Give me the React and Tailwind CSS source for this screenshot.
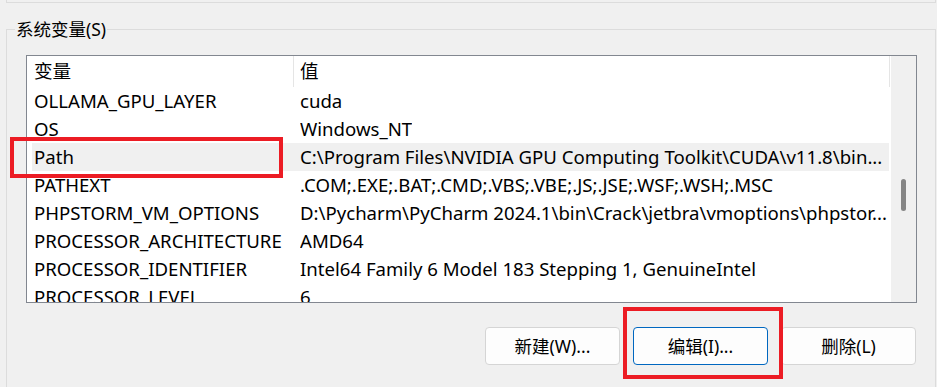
const ROWS = [
  ['OLLAMA_GPU_LAYER', 'cuda'],
  ['OS', 'Windows_NT'],
  ['Path', 'C:\\Program Files\\NVIDIA GPU Computing Toolkit\\CUDA\\v11.8\\bin...'],
  ['PATHEXT', '.COM;.EXE;.BAT;.CMD;.VBS;.VBE;.JS;.JSE;.WSF;.WSH;.MSC'],
  ['PHPSTORM_VM_OPTIONS', 'D:\\Pycharm\\PyCharm 2024.1\\bin\\Crack\\jetbra\\vmoptions\\phpstor...'],
  ['PROCESSOR_ARCHITECTURE', 'AMD64'],
  ['PROCESSOR_IDENTIFIER', 'Intel64 Family 6 Model 183 Stepping 1, GenuineIntel'],
  ['PROCESSOR_LEVEL', '6'],
]

const FONT = "font-['Noto_Sans','Noto_Sans_CJK_SC',sans-serif]"

function Button({ children, active = false }) {
  return (
    <button
      type="button"
      className={`w-[135px] h-[38px] rounded-[4px] bg-[#fdfdfd] text-[17.5px] text-black flex items-center justify-center ${
        active ? 'border border-[#0067c0]' : 'border border-[#d5d5d5]'
      }`}
    >
      {children}
    </button>
  )
}

export default function App() {
  return (
    <div className={`relative w-[937px] h-[387px] overflow-hidden bg-[#f0f0f0] text-black ${FONT}`}>
      {/* bottom of the group box above */}
      <div className="ml-[6px] mr-[1px] h-[3px] border-x border-b border-[#dcdcdc]" />

      {/* System variables group */}
      <div className="relative mt-[26px] ml-[6px] mr-[1px] h-[400px] border border-[#dcdcdc] pt-[25px] pl-[19px]">
        <span className="absolute left-[8px] -top-[13px] px-[1px] bg-[#f0f0f0] text-[17.5px] leading-[24px]">
          系统变量(S)
        </span>

        {/* list view */}
        <div className="w-[891px] h-[248px] border border-[#828790] bg-white flex">
          <div className="w-[862px] h-full overflow-hidden text-[18.6px]">
            <div className="flex h-[31px] items-center">
              <div className="w-[266px] pl-[7px] leading-none">变量</div>
              <div className="w-px h-full bg-[#e5e5e5]" />
              <div className="pl-[6px] leading-none">值</div>
            </div>
            {ROWS.map(([name, value]) => (
              <div
                key={name}
                className={`flex h-[28px] items-center whitespace-nowrap ${
                  name === 'Path' ? 'bg-[#f0f0f0] ml-[5px] pl-[2px]' : 'pl-[7px]'
                }`}
              >
                <div className="w-[266px] shrink-0">{name}</div>
                <div className="overflow-hidden">{value}</div>
              </div>
            ))}
          </div>
          <div className="w-px h-[31px] bg-[#e5e5e5]" />
          <div className="flex-1 bg-[#f0f0f0] border-l border-white relative">
            <div className="absolute left-[10px] top-[123px] w-[5px] h-[32px] rounded-full bg-[#858585]" />
          </div>
        </div>

        {/* action buttons */}
        <div className="flex justify-end gap-[13px] mt-[24px] pr-[19px]">
          <Button>新建(W)...</Button>
          <Button active>编辑(I)...</Button>
          <Button>删除(L)</Button>
        </div>
      </div>

      {/* red highlight marks */}
      <div className="absolute left-[10px] top-[137px] w-[273px] h-[41px] border-4 border-[#ec1c24]" />
      <div className="absolute left-[623px] top-[307px] w-[160px] h-[72px] border-4 border-[#ec1c24]" />
    </div>
  )
}
